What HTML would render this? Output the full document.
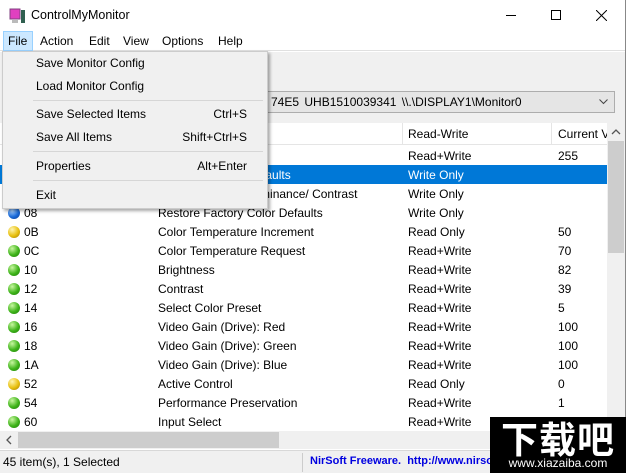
<!DOCTYPE html>
<html><head><meta charset="utf-8"><style>
*{margin:0;padding:0;box-sizing:border-box}
body{width:626px;height:473px;overflow:hidden;position:relative;background:#fff;font-family:"Segoe UI","Liberation Sans",sans-serif;font-size:12px;color:#000}
.abs{position:absolute}
.title{left:0;top:0;width:626px;height:31px;background:#fff}
.menubar{left:0;top:31px;width:626px;height:20px;background:#fff;border-bottom:1px solid #e0e0e0}
.menubar span{position:absolute;top:3px}
.tool{left:0;top:52px;width:626px;height:71px;background:#f0f0f0}
.combo{left:8px;top:91px;width:607px;height:22px;border:1px solid #adadad;background:#e5e5e5;white-space:nowrap;overflow:hidden}
.hdr{left:0;top:123px;width:607px;height:22px;background:#fff;border-bottom:1px solid #e5e5e5;overflow:hidden}
.hdr span{position:absolute;top:4px;white-space:nowrap}
.sep{position:absolute;top:0;width:1px;height:22px;background:#e5e5e5}
.row{position:absolute;left:0;width:607px;height:19px}
.row span{position:absolute;top:3px;white-space:nowrap}
.sel{background:#0078d7;color:#fff}
.ball{position:absolute;left:8px;top:4px;width:12px;height:12px;border-radius:50%}
.g{background:radial-gradient(circle at 35% 30%,#c8f7a0,#3fb41a 55%,#1d7a08)}
.y{background:radial-gradient(circle at 35% 30%,#fff5b0,#e8c010 55%,#a07800)}
.b{background:radial-gradient(circle at 35% 30%,#a8d0ff,#1a6ad8 55%,#0a3890)}
.vs{left:607px;top:123px;width:18px;height:308px;background:#f0f0f0}
.hs{left:0;top:431px;width:607px;height:18px;background:#f0f0f0}
.status{left:0;top:450px;width:626px;height:23px;background:#f0f0f0;border-top:1px solid #d8d8d8}
.menu{left:2px;top:51px;width:266px;height:158px;background:#f0f0f0;border:1px solid #ccc;box-shadow:2px 2px 3px rgba(0,0,0,.35)}
.menu span{position:absolute;white-space:nowrap}
.menu .r{right:20px}
.msep{position:absolute;left:30px;width:230px;height:1px;background:#d6d6d6}
</style></head><body>
<div class="abs title">
 <svg class="abs" style="left:9px;top:8px" width="17" height="17" viewBox="0 0 17 17"><rect x="1" y="1" width="10" height="10" fill="#e040c0" stroke="#804080"/><rect x="3" y="12" width="6" height="3" fill="#bbb"/><rect x="12" y="2" width="4" height="13" fill="#306050"/></svg>
 <span class="abs" style="left:31px;top:8px;font-size:12.5px">ControlMyMonitor</span>
 <div class="abs" style="left:506px;top:15px;width:10px;height:1px;background:#000"></div>
 <div class="abs" style="left:551px;top:10px;width:10px;height:10px;border:1px solid #000"></div>
 <svg class="abs" style="left:596px;top:10px" width="11" height="11"><path d="M0 0L11 11M11 0L0 11" stroke="#000" stroke-width="1"/></svg>
</div>
<div class="abs menubar">
 <div class="abs" style="left:3px;top:0;width:30px;height:20px;background:#cce8ff;border:1px solid #99d1ff"></div>
 <span style="left:8px">File</span><span style="left:40px">Action</span><span style="left:89px">Edit</span><span style="left:123px">View</span><span style="left:162px">Options</span><span style="left:218px">Help</span>
</div>
<div class="abs tool"></div>
<div class="abs combo"><span class="abs" style="left:262px;top:3px;word-spacing:2px">74E5 UHB1510039341 \\.\DISPLAY1\Monitor0</span>
 <svg class="abs" style="right:6px;top:7px" width="9" height="6"><path d="M0.5 0.5L4.5 4.5L8.5 0.5" stroke="#444" fill="none"/></svg></div>
<div class="abs hdr"><span style="left:24px">VCP Code</span><span style="left:158px">VCP Code Name</span><div class="sep" style="left:152px"></div><div class="sep" style="left:402px"></div><span style="left:408px">Read-Write</span><div class="sep" style="left:551px"></div><span style="left:558px">Current Value</span></div>
<div class="abs" style="left:0;top:146px;width:607px;height:285px;overflow:hidden">
<div class="row" style="top:0"><i class="ball g"></i><span style="left:24px">02</span><span style="left:158px">New Control Value</span><span style="left:408px">Read+Write</span><span style="left:558px">255</span></div>
<div class="row sel" style="top:19px"><i class="ball b"></i><span style="left:24px">04</span><span style="left:158px">Restore Factory Defaults</span><span style="left:408px">Write Only</span></div>
<div class="row" style="top:38px"><i class="ball b"></i><span style="left:24px">05</span><span style="left:158px">Restore Factory Luminance/ Contrast</span><span style="left:408px">Write Only</span></div>
<div class="row" style="top:57px"><i class="ball b"></i><span style="left:24px">08</span><span style="left:158px">Restore Factory Color Defaults</span><span style="left:408px">Write Only</span></div>
<div class="row" style="top:76px"><i class="ball y"></i><span style="left:24px">0B</span><span style="left:158px">Color Temperature Increment</span><span style="left:408px">Read Only</span><span style="left:558px">50</span></div>
<div class="row" style="top:95px"><i class="ball g"></i><span style="left:24px">0C</span><span style="left:158px">Color Temperature Request</span><span style="left:408px">Read+Write</span><span style="left:558px">70</span></div>
<div class="row" style="top:114px"><i class="ball g"></i><span style="left:24px">10</span><span style="left:158px">Brightness</span><span style="left:408px">Read+Write</span><span style="left:558px">82</span></div>
<div class="row" style="top:133px"><i class="ball g"></i><span style="left:24px">12</span><span style="left:158px">Contrast</span><span style="left:408px">Read+Write</span><span style="left:558px">39</span></div>
<div class="row" style="top:152px"><i class="ball g"></i><span style="left:24px">14</span><span style="left:158px">Select Color Preset</span><span style="left:408px">Read+Write</span><span style="left:558px">5</span></div>
<div class="row" style="top:171px"><i class="ball g"></i><span style="left:24px">16</span><span style="left:158px">Video Gain (Drive): Red</span><span style="left:408px">Read+Write</span><span style="left:558px">100</span></div>
<div class="row" style="top:190px"><i class="ball g"></i><span style="left:24px">18</span><span style="left:158px">Video Gain (Drive): Green</span><span style="left:408px">Read+Write</span><span style="left:558px">100</span></div>
<div class="row" style="top:209px"><i class="ball g"></i><span style="left:24px">1A</span><span style="left:158px">Video Gain (Drive): Blue</span><span style="left:408px">Read+Write</span><span style="left:558px">100</span></div>
<div class="row" style="top:228px"><i class="ball y"></i><span style="left:24px">52</span><span style="left:158px">Active Control</span><span style="left:408px">Read Only</span><span style="left:558px">0</span></div>
<div class="row" style="top:247px"><i class="ball g"></i><span style="left:24px">54</span><span style="left:158px">Performance Preservation</span><span style="left:408px">Read+Write</span><span style="left:558px">1</span></div>
<div class="row" style="top:266px"><i class="ball g"></i><span style="left:24px">60</span><span style="left:158px">Input Select</span><span style="left:408px">Read+Write</span><span style="left:558px">15</span></div>
</div>
<div class="abs vs"><svg class="abs" style="left:4px;top:6px" width="10" height="6"><path d="M1 5L5 1L9 5" stroke="#555" fill="none" stroke-width="1.3"/></svg><div class="abs" style="left:1px;top:18px;width:16px;height:112px;background:#cdcdcd"></div></div>
<div class="abs hs"><svg class="abs" style="left:6px;top:4px" width="6" height="10"><path d="M5 1L1 5L5 9" stroke="#555" fill="none" stroke-width="1.3"/></svg><div class="abs" style="left:18px;top:1px;width:261px;height:16px;background:#cdcdcd"></div></div>
<div class="abs status"><span class="abs" style="left:3px;top:4px">45 item(s), 1 Selected</span><div class="abs" style="left:302px;top:2px;width:1px;height:19px;background:#ccc"></div><span class="abs" style="left:310px;top:4px;color:#0000e0;font-weight:bold;font-size:11px">NirSoft Freeware.&nbsp; http://www.nirsoft.net</span></div>
<div class="abs" style="left:625px;top:0;width:1px;height:473px;background:#888"></div>
<div class="abs" style="left:490px;top:417px;width:136px;height:56px;background:#000;color:#fff;text-align:center;overflow:hidden">
 <div style="font-family:'Noto Sans CJK SC',sans-serif;font-weight:700;font-size:37px;line-height:40px;letter-spacing:1px">下载吧</div>
 <div style="font-size:12px;line-height:13px">www.xiazaiba.com</div>
</div>
<div class="abs menu">
 <span style="left:33px;top:4px">Save Monitor Config</span>
 <span style="left:33px;top:27px">Load Monitor Config</span>
 <div class="msep" style="top:48px"></div>
 <span style="left:33px;top:55px">Save Selected Items</span><span class="r" style="top:55px">Ctrl+S</span>
 <span style="left:33px;top:78px">Save All Items</span><span class="r" style="top:78px">Shift+Ctrl+S</span>
 <div class="msep" style="top:99px"></div>
 <span style="left:33px;top:107px">Properties</span><span class="r" style="top:107px">Alt+Enter</span>
 <div class="msep" style="top:128px"></div>
 <span style="left:33px;top:136px">Exit</span>
</div>
</body></html>
